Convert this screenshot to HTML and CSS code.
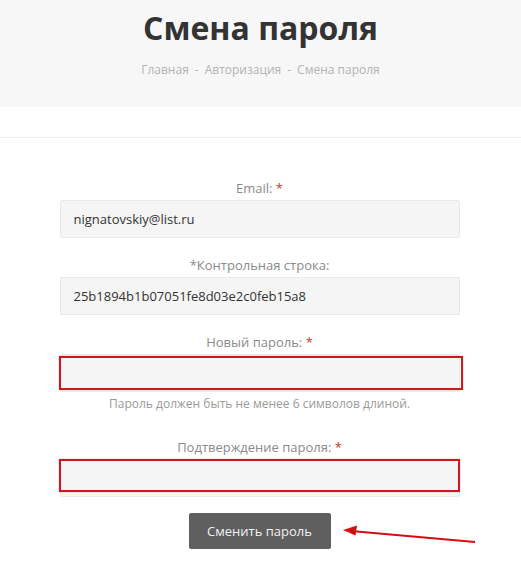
FILE: index.html
```html
<!DOCTYPE html>
<html lang="ru">
<head>
<meta charset="utf-8">
<title>Смена пароля</title>
<link rel="stylesheet" href="styles.css">
</head>
<body>
<header class="page-head">
  <h1 class="page-title">Смена пароля</h1>
  <nav class="crumbs">
    <a href="#">Главная</a><span class="sep">-</span><a href="#">Авторизация</a><span class="sep">-</span><span>Смена пароля</span>
  </nav>
</header>
<div class="divider"></div>
<main class="form-wrap">
  <form class="form">
    <div class="field">
      <label class="label">Email: <span class="req">*</span></label>
      <input class="input" type="text" value="nignatovskiy@list.ru">
    </div>
    <div class="field">
      <label class="label">*Контрольная строка:</label>
      <input class="input" type="text" value="25b1894b1b07051fe8d03e2c0feb15a8">
    </div>
    <div class="field field-new">
      <label class="label">Новый пароль: <span class="req">*</span></label>
      <div class="input-box">
        <input class="input" type="password">
        <span class="mark mark-1"></span>
      </div>
      <p class="hint">Пароль должен быть не менее 6 символов длиной.</p>
    </div>
    <div class="field field-confirm">
      <label class="label">Подтверждение пароля: <span class="req">*</span></label>
      <div class="input-box">
        <input class="input" type="password">
        <span class="mark mark-2"></span>
      </div>
    </div>
    <div class="actions">
      <button class="btn" type="button">Сменить пароль</button>
      <svg class="arrow" width="140" height="24" viewBox="0 0 140 24">
        <line x1="8" y1="8" x2="132" y2="19" stroke="#d40f14" stroke-width="2"/>
        <polygon points="0,7 14,2.5 12.5,12.5" fill="#d40f14"/>
      </svg>
    </div>
  </form>
</main>
</body>
</html>
```
FILE: styles.css
```css
* { box-sizing: border-box; }
html, body { margin: 0; padding: 0; background: #fff; }
body { font-family: "Open Sans", "Noto Sans", sans-serif; color: #333; }

.page-head {
  background: #f7f7f7;
  height: 107px;
  text-align: center;
  padding-top: 5px;
}
.page-title {
  margin: 0;
  font-size: 32px;
  line-height: 46px;
  font-weight: 700;
  color: #333;
}
.crumbs {
  margin-top: 9px;
  font-size: 12px;
  line-height: 20px;
  color: #b3b3b3;
}
.crumbs a { color: #b3b3b3; text-decoration: none; }
.crumbs .sep { margin: 0 6px; }

.divider {
  margin-top: 30px;
  height: 1px;
  background: #eeeeee;
}

.form-wrap { padding-top: 40px; }
.form {
  width: 400px;
  margin: 0 auto;
  position: relative;
  left: -1px;
}
.field { margin-bottom: 17px; }
.label {
  display: block;
  text-align: center;
  font-size: 13px;
  line-height: 20px;
  color: #8a8a8a;
  margin-bottom: 2px;
}
.req { color: #c0392b; }
.input {
  display: block;
  width: 100%;
  height: 38px;
  background: #f5f5f5;
  border: 1px solid #eaeaea;
  border-radius: 2px;
  padding: 0 13px;
  font-family: "Open Sans", "Noto Sans", sans-serif;
  font-size: 13px;
  color: #333;
  outline: none;
}
.input-box { position: relative; }
.mark {
  position: absolute;
  border: 2px solid #d0161d;
  box-shadow: 0 0 1px rgba(208, 22, 29, 0.5);
  pointer-events: none;
}
.mark-1 { left: -1px; right: -3px; top: 2px; bottom: 2px; }
.mark-2 { left: -1px; right: 0; top: 0; bottom: 5px; }

.hint {
  margin: 2px 0 0;
  text-align: center;
  font-size: 12px;
  line-height: 20px;
  color: #9a9a9a;
}
.field-new { margin-bottom: 23px; }
.field-confirm { margin-bottom: 16px; }

.actions {
  position: relative;
  display: flex;
  justify-content: center;
}
.btn {
  width: 142px;
  height: 36px;
  background: #5f5f5f;
  color: #f2f2f2;
  border: none;
  border-radius: 2px;
  font-family: "Open Sans", "Noto Sans", sans-serif;
  font-size: 13px;
  cursor: pointer;
}
.arrow {
  position: absolute;
  left: 283px;
  top: 10px;
}
```
